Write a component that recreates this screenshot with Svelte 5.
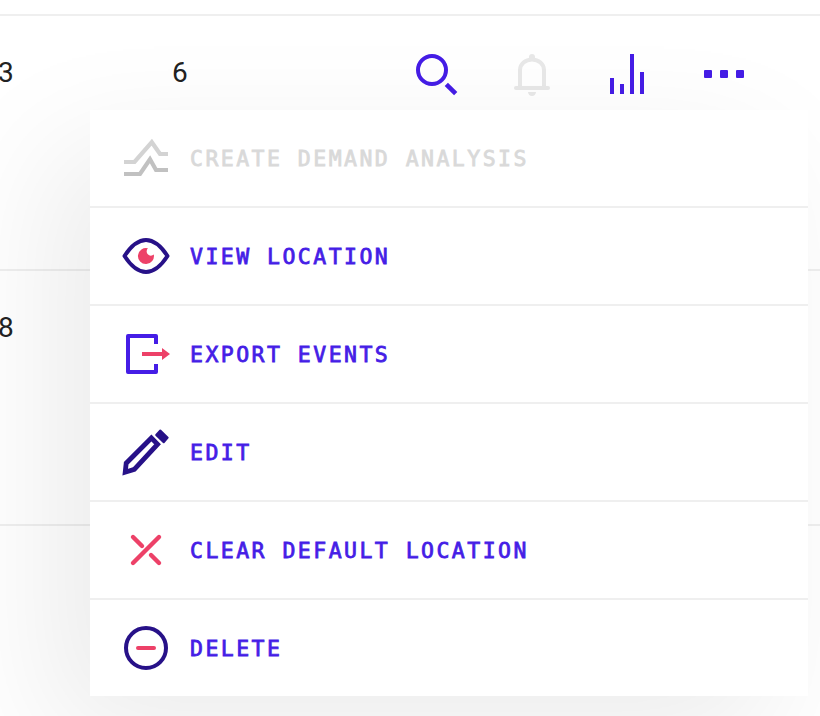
<script>
  const rows = [{ count: '3', total: '6', actions: true }, { count: '8' }, { count: '' }];
  const items = [
    { id: 'demand', label: 'CREATE DEMAND ANALYSIS', disabled: true },
    { id: 'view', label: 'VIEW LOCATION' },
    { id: 'export', label: 'EXPORT EVENTS' },
    { id: 'edit', label: 'EDIT' },
    { id: 'clear', label: 'CLEAR DEFAULT LOCATION' },
    { id: 'delete', label: 'DELETE' }
  ];
</script>

<main>
  <div class="table">
    {#each rows as row}
      <div class="row">
        <span class="count">{row.count}</span>
        <span class="total">{row.total ?? ''}</span>
        {#if row.actions}
          <div class="actions">
            <svg viewBox="0 0 48 48" fill="none" stroke="#451de6" stroke-width="4">
              <circle cx="20" cy="20" r="14" /><path d="M34.3 34.3 43.7 43.7" stroke-width="4.6" />
            </svg>
            <svg viewBox="0 0 48 48" fill="none" stroke="#e8e8e8" stroke-width="4">
              <path d="M12 38V20a12 10.5 0 0 1 24 0V38" />
              <path d="M8 38H40" stroke-linecap="round" />
              <path d="M21 9V7a3 3 0 0 1 6 0V9ZM20 42H28Q27.5 46 24 46T20 42Z" fill="#e8e8e8" stroke="none" />
            </svg>
            <svg viewBox="0 0 48 48" fill="#451de6">
              <path d="M6 28h4v16H6zM16 34h4v10h-4zM26 4h4v40h-4zM36 22h4v22h-4z" />
            </svg>
            <svg viewBox="0 0 48 48" fill="#451de6">
              <rect x="4" y="20" width="8" height="8" rx="1" /><rect x="20" y="20" width="8" height="8" rx="1" /><rect x="36" y="20" width="8" height="8" rx="1" />
            </svg>
          </div>
        {/if}
      </div>
    {/each}
  </div>

  <div class="menu">
    {#each items as item}
      <div class="item" class:disabled={item.disabled}>
        <svg viewBox="0 0 48 48" fill="none" stroke-width="4">
          {#if item.id === 'demand'}
            <path d="M2 28H12.5L29.8 8.2 38 20H46" stroke="#d3d3d3" stroke-width="4.2" />
            <path d="M2 40H18L28 25.3 34 36H46" stroke="#c1c1c1" stroke-width="4.2" />
          {:else if item.id === 'view'}
            <path d="M2.5 24C9 14 16 8 24 8S39 14 45.5 24C39 34 32 40 24 40S9 34 2.5 24Z" stroke="#271188" stroke-linejoin="round" />
            <path d="M26 16.3A8 8 0 1 0 31.8 22.5 4.2 4.2 0 0 1 26 16.3Z" fill="#ed4168" />
          {:else if item.id === 'export'}
            <path d="M34 14V6H6V42H34V34" stroke="#451de6" stroke-linejoin="round" />
            <path d="M20 22H40V18L48 24 40 30V26H20Z" fill="#ed4168" />
          {:else if item.id === 'edit'}
            <path d="M3.2 44.2 4.2 35.2 29.4 10 35.6 16.2 12.3 41.4Z" stroke="#271188" stroke-width="4.8" />
            <path d="M38.3 2.5 45.7 9.7 41.7 14.3 34.2 7Z" fill="#271188" stroke="#271188" stroke-width="2" stroke-linejoin="round" />
          {:else if item.id === 'clear'}
            <path d="M11 37 37 11M11 11 20 20M29 29 37 37" stroke="#ed4168" stroke-width="4.4" stroke-linecap="round" />
          {:else}
            <circle cx="24" cy="24" r="20" stroke="#271188" />
            <path d="M16 24H32" stroke="#ed4168" stroke-linecap="round" />
          {/if}
        </svg>
        <span>{item.label}</span>
      </div>
    {/each}
  </div>
</main>

<style>
  :global(body) { background: #fff; }
  main { position: relative; width: 820px; height: 716px; overflow: hidden; }
  .table { padding-top: 14px; }
  .row {
    display: flex;
    box-sizing: border-box;
    height: 255px;
    border-top: 2px solid #efefef;
    font: 28px/32px Roboto, sans-serif;
    color: #222;
  }
  .count { width: 174px; box-sizing: border-box; margin-left: -2px; padding-top: 41px; }
  .total { width: 240px; padding-top: 41px; }
  .actions { display: flex; gap: 48px; padding-top: 34px; }
  svg { display: block; width: 48px; height: 48px; flex: none; overflow: visible; }
  .menu {
    position: absolute;
    top: 110px;
    left: 90px;
    width: 718px;
    background: #fff;
    box-shadow: -40px 40px 120px rgba(0, 0, 0, 0.08);
  }
  .item {
    display: flex;
    align-items: center;
    gap: 20px;
    height: 96px;
    padding-left: 32px;
    border-bottom: 2px solid #efefef;
    font: 21.5px/32px "DejaVu Sans Mono", monospace;
    letter-spacing: 2.46px;
    -webkit-text-stroke: 0.8px currentColor;
    color: #451de6;
  }
  .item span { padding-top: 2px; }
  .item:last-child { border-bottom: 0; }
  .disabled { color: #d9d9d9; }
</style>
